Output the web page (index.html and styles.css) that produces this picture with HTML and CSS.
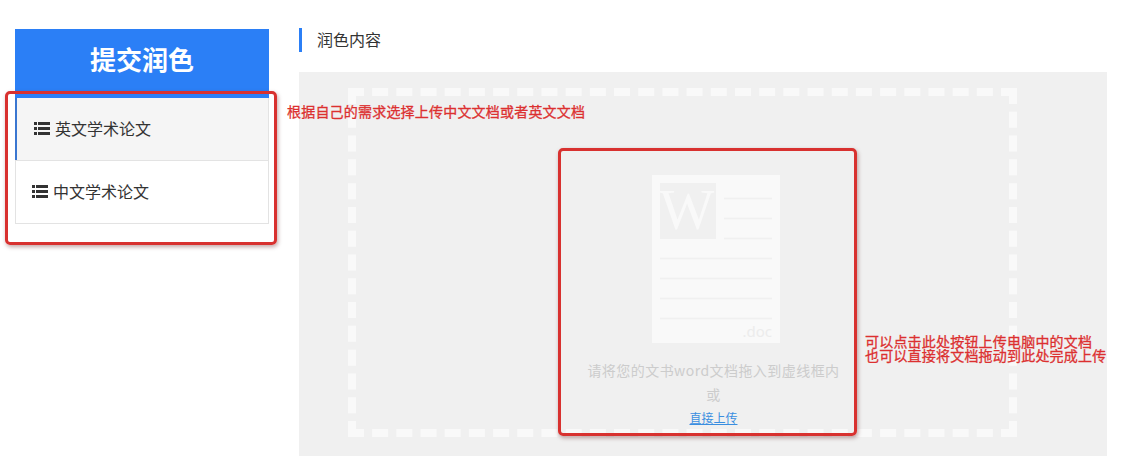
FILE: index.html
```html
<!DOCTYPE html>
<html lang="zh">
<head>
<meta charset="utf-8">
<title>提交润色</title>
<link rel="stylesheet" href="styles.css">
</head>
<body>
<div class="page">
  <aside class="sidebar">
    <h2 class="side-head">提交润色</h2>
    <ul class="menu">
      <li class="menu-item active">
        <svg class="list-icon" viewBox="0 0 16 13"><path d="M0 0h3v3H0zM4 0h12v3H4zM0 5h3v3H0zM4 5h12v3H4zM0 10h3v3H0zM4 10h12v3H4z"/></svg>
        <span>英文学术论文</span>
      </li>
      <li class="menu-item">
        <svg class="list-icon" viewBox="0 0 16 13"><path d="M0 0h3v3H0zM4 0h12v3H4zM0 5h3v3H0zM4 5h12v3H4zM0 10h3v3H0zM4 10h12v3H4z"/></svg>
        <span>中文学术论文</span>
      </li>
    </ul>
  </aside>
  <main class="content">
    <h3 class="section-title">润色内容</h3>
    <section class="panel">
      <div class="dropzone">
        <svg class="doc-icon" viewBox="0 0 128 168">
          <rect width="128" height="168" fill="#f9f9f9"/>
          <rect x="8" y="8" width="56" height="56" fill="#f0f0f0"/>
          <text x="7.500" y="54" class="doc-w">W</text>
          <path d="M72 23.500h48M72 43.500h48M72 63.500h48M8 83.500h112M8 103.500h112M8 123.500h112M8 143.500h112" stroke="#f0f0f0" stroke-width="1.500"/>
          <text x="120" y="162" text-anchor="end" class="doc-ext">.doc</text>
        </svg>
        <p class="hint hint-first">请将您的文书word文档拖入到虚线框内</p>
        <p class="hint">或</p>
        <a class="upload-link" href="#">直接上传</a>
      </div>
    </section>
  </main>
  <div class="mark mark-menu"></div>
  <div class="mark mark-doc"></div>
  <p class="note note-top">根据自己的需求选择上传中文文档或者英文文档</p>
  <p class="note note-side">可以点击此处按钮上传电脑中的文档<br>也可以直接将文档拖动到此处完成上传</p>
</div>
</body>
</html>
```
FILE: styles.css
```css
* { box-sizing: border-box; }
html, body { margin: 0; padding: 0; height: 100%; overflow: hidden; background: #fff; }
body { font-family: "Noto Sans CJK SC", "Noto Sans", sans-serif; color: #333; }
.page { position: relative; display: flex; width: 1143px; height: 456px; overflow: hidden; }

.sidebar { width: 254px; margin-left: 15px; padding-top: 29px; flex: none; }
.side-head {
  margin: 0; height: 69px; padding-top: 9px; background: #2b7ff6; color: #fff;
  font-size: 26px; font-weight: 700; line-height: 42px; text-align: center;
}
.menu { list-style: none; margin: 0; padding: 0; border: 1px solid #e3e3e3; border-top: 0; background: #fff; }
.menu-item {
  display: flex; align-items: center; gap: 5px; height: 62px; padding: 0 0 2px 16px;
  font-size: 16px; color: #333; line-height: 24px;
}
.menu-item + .menu-item { height: 63px; border-top: 1px solid #e3e3e3; }
.menu-item.active { background: #f5f5f5; border-left: 2px solid #3a76d0; margin-left: -1px; padding-left: 17px; }
.list-icon { width: 16px; height: 13px; fill: #333; flex: none; }

.content { width: 808px; margin-left: 30px; padding-top: 28px; flex: none; }
.section-title {
  margin: 0; height: 24px; padding-left: 15px; border-left: 3px solid #2b7ff6;
  font-size: 16px; font-weight: 400; line-height: 22px; color: #333;
}
.panel { margin-top: 20px; height: 400px; padding: 16px 0 0 49px; background: #f0f0f0; }
.dropzone {
  display: flex; flex-direction: column; align-items: center;
  width: 669px; height: 349px; padding: 79px 0 0 62px;
  border: 8px dashed #f9f9f9;
}
.doc-icon { width: 128px; height: 168px; flex: none; margin-left: 5px; }
.doc-w { font-family: "Liberation Serif", serif; font-size: 58px; fill: #f9f9f9; }
.doc-ext { font-family: "Noto Sans", sans-serif; font-size: 15px; fill: #ececec; }
.hint { margin: 0; font-size: 14px; line-height: 24px; color: #ccc; text-align: center; letter-spacing: .45px; }
.hint-first { margin-top: 15px; }
.upload-link { font-size: 12px; line-height: 24px; color: #3a8ee0; text-decoration: underline; }

.mark { position: absolute; border: 3px solid #d8312f; border-radius: 5px; box-shadow: 1px 2px 4px rgba(80, 0, 0, .35); }
.mark-menu { left: 5px; top: 91px; width: 272px; height: 154px; }
.mark-doc { left: 558px; top: 148px; width: 299px; height: 288px; }
.note { position: absolute; margin: 0; font-size: 14px; line-height: 14px; color: #dc3030; letter-spacing: .2px; white-space: nowrap; -webkit-text-stroke: .3px #dc3030; }
.note-top { left: 287px; top: 104px; }
.note-side { left: 865px; top: 334px; }
```
